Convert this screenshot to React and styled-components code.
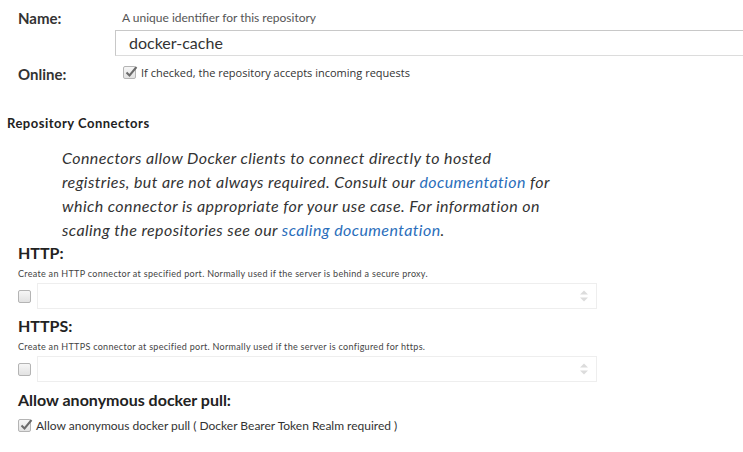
import React from "react";
import styled, { createGlobalStyle } from "styled-components";

const GlobalStyle = createGlobalStyle`
  html, body {
    margin: 0;
    padding: 0;
    background: #fff;
    overflow: hidden;
  }
  body {
    font-family: Lato, "Open Sans", sans-serif;
    color: #333;
  }
`;

const Page = styled.div`
  width: 743px;
  height: 452px;
  overflow: hidden;
  position: relative;
`;

const FieldRow = styled.div`
  display: grid;
  grid-template-columns: 115px 1fr;
  align-items: start;
  margin-top: ${(p) => p.top || 0}px;
`;

const Label = styled.div`
  padding-left: 18px;
  font-size: 15px;
  font-weight: 700;
  line-height: 18px;
  margin-top: ${(p) => p.shift || 0}px;
  color: #333;
`;

const Field = styled.div`
  display: flex;
  flex-direction: column;
`;

const Help = styled.div`
  font-size: 12px;
  line-height: 14px;
  color: #555;
  padding-left: 7px;
  margin-bottom: 5px;
`;

const TextInput = styled.div`
  height: 26px;
  box-sizing: border-box;
  border: 1px solid #c8c8c8;
  border-bottom-color: #dcdcdc;
  border-right: none;
  font-size: 16px;
  line-height: 24px;
  padding-left: 13px;
  color: #333;
`;

const CheckLine = styled.label`
  display: flex;
  align-items: center;
  gap: ${(p) => p.gap || 5}px;
  padding-left: ${(p) => p.indent || 0}px;
  margin-top: ${(p) => p.top || 0}px;
  font-family: ${(p) => (p.alt ? '"Open Sans", sans-serif' : "Lato, sans-serif")};
  font-size: ${(p) => p.size || 11}px;
  color: #333;
`;

const Box = styled.span`
  width: 13px;
  height: 13px;
  box-sizing: border-box;
  border: 1px solid #b4b4b4;
  border-radius: 2px;
  background: linear-gradient(#f6f6f6, #e2e2e2);
  display: inline-flex;
  flex-shrink: 0;
  position: relative;
  svg {
    position: absolute;
    left: 0;
    top: -3px;
  }
`;

const Check = ({ checked }) => (
  <Box>
    {checked && (
      <svg width="15" height="15" viewBox="0 0 15 15">
        <path d="M2.5 8.5 L5.5 11.5 L12.5 3" fill="none" stroke="#6b6b6b" strokeWidth="2" />
      </svg>
    )}
  </Box>
);

const SectionTitle = styled.div`
  margin: 32px 0 0 7px;
  font-size: 13px;
  font-weight: 700;
  line-height: 16px;
  letter-spacing: 0.5px;
  color: #222;
`;

const Intro = styled.p`
  margin: 15px 0 0 62px;
  width: 520px;
  font-size: 16px;
  font-style: italic;
  line-height: 24px;
  letter-spacing: 0.42px;
  white-space: nowrap;
  color: #333;
  a {
    color: #2a6ebb;
    text-decoration: none;
  }
`;

const Heading = styled.div`
  margin: ${(p) => p.top || 0}px 0 0 18px;
  font-size: 16px;
  font-weight: 700;
  line-height: 20px;
  color: #222;
`;

const Small = styled.div`
  margin: 5px 0 0 18px;
  font-size: 9px;
  line-height: 11px;
  letter-spacing: 0.3px;
  color: #444;
`;

const PortRow = styled.div`
  display: flex;
  align-items: center;
  gap: 6px;
  margin: 4px 0 0 18px;
`;

const PortInput = styled.div`
  width: 560px;
  height: 26px;
  box-sizing: border-box;
  border: 1px solid #eeeeee;
  display: flex;
  justify-content: flex-end;
  align-items: center;
  padding-right: 7px;
`;

const Spinner = () => (
  <svg width="10" height="14" viewBox="0 0 10 14">
    <path d="M1 5.5 L5 1.5 L9 5.5 Z" fill="#dcdcdc" />
    <path d="M1 8.5 L5 12.5 L9 8.5 Z" fill="#dcdcdc" />
  </svg>
);

const Port = ({ title, help, top }) => (
  <>
    <Heading top={top}>{title}</Heading>
    <Small>{help}</Small>
    <PortRow>
      <Check />
      <PortInput>
        <Spinner />
      </PortInput>
    </PortRow>
  </>
);

export default function App() {
  return (
    <Page>
      <GlobalStyle />
      <FieldRow top={11}>
        <Label shift={-2}>Name:</Label>
        <Field>
          <Help>A unique identifier for this repository</Help>
          <TextInput>docker-cache</TextInput>
        </Field>
      </FieldRow>
      <FieldRow top={9}>
        <Label shift={0}>Online:</Label>
        <CheckLine alt indent={8} gap={5} size={11}>
          <Check checked />
          If checked, the repository accepts incoming requests
        </CheckLine>
      </FieldRow>

      <SectionTitle>Repository Connectors</SectionTitle>
      <Intro>
        Connectors allow Docker clients to connect directly to hosted
        <br />
        registries, but are not always required. Consult our{" "}
        <a href="#">documentation</a> for
        <br />
        which connector is appropriate for your use case. For information on
        <br />
        scaling the repositories see our <a href="#">scaling documentation</a>.
      </Intro>

      <Port
        top={1}
        title="HTTP:"
        help="Create an HTTP connector at specified port. Normally used if the server is behind a secure proxy."
      />
      <Port
        top={7}
        title="HTTPS:"
        help="Create an HTTPS connector at specified port. Normally used if the server is configured for https."
      />

      <Heading top={8}>Allow anonymous docker pull:</Heading>
      <CheckLine indent={18} gap={5} size={12} top={8}>
        <Check checked />
        Allow anonymous docker pull ( Docker Bearer Token Realm required )
      </CheckLine>
    </Page>
  );
}
